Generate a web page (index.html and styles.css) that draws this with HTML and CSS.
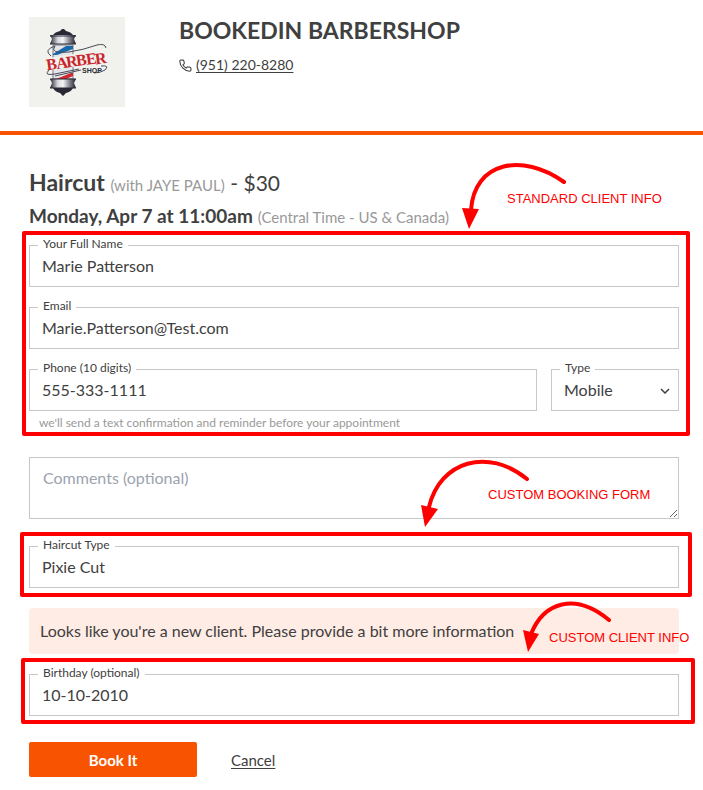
FILE: index.html
```
<!DOCTYPE html>
<html lang="en">
<head>
    <meta charset="UTF-8">
    <meta name="viewport" content="width=device-width, initial-scale=1.0">
    <title>Bookedin Barbershop</title>
    <link rel="stylesheet" href="styles.css">
</head>
<body>
    <header class="shop-header">
        <svg class="logo" viewBox="0 0 96 90" role="img" aria-label="Barber Shop logo">
            <defs>
                <linearGradient id="chrome">
                    <stop offset="0" stop-color="#25252f"/>
                    <stop offset=".3" stop-color="#d8d8de"/>
                    <stop offset=".5" stop-color="#f4f4f6"/>
                    <stop offset=".75" stop-color="#85858f"/>
                    <stop offset="1" stop-color="#20202b"/>
                </linearGradient>
            </defs>
            <rect width="96" height="90" fill="#f1f1ed"/>
            <!-- pole -->
            <path d="M24 28h20v34H24z" fill="#e4e6e9" stroke="#777783"/>
            <path d="M24 37l13-8h7v3L28 38h-4z" fill="#1769aa"/>
            <path d="M27 62l15-6h2v3l-7 3z" fill="#cf2930"/>
            <path d="M24 18q2-3 7-4l2-2h2l2 2q5 1 7 4z" fill="#292936"/>
            <path d="M21 18h26l-2 4 2 5H21l2-5z" fill="url(#chrome)"/>
            <path d="M21 19h26M21 27h26" stroke="#292936"/>
            <path d="M21 62h26l-2 4 2 5H21l2-5z" fill="url(#chrome)"/>
            <path d="M21 62h26M21 71h26" stroke="#292936"/>
            <path d="M24 71h20q-2 4-7 5l-3 3-3-3q-5-1-7-5z" fill="#292936"/>
            <!-- ribbon -->
            <path d="M20 41l56-9v12l-56 10z" fill="#f1f1ed"/>
            <path d="M22 39q-8-6 4-10-6 8 14 6 14-2 28-7 8-2 9 3" fill="none" stroke="#4b4b58"/>
            <path d="M20 53q-6 6 6 4l24-5M26 59l26-6m20-4q9-1 4 4-5 3-11 3" fill="none" stroke="#4b4b58"/>
            <g class="logo-word" transform="rotate(-8 20 53)">
                <text x="18" y="53">B</text>
                <text x="28" y="53">A</text>
                <text x="38" y="53">R</text>
                <text x="48" y="53">B</text>
                <text x="58" y="53">E</text>
                <text x="67" y="54">R</text>
            </g>
            <text class="logo-shop" x="53" y="56">SHOP</text>
        </svg>
        <div class="shop-info">
            <h1>BOOKEDIN BARBERSHOP</h1>
            <p class="phone">
                <svg class="phone-icon" viewBox="0 0 24 24" aria-hidden="true">
                    <path d="M22 17v3.500a2 2 0 0 1-2.200 2A19 19 0 0 1 1.500 4.200 2 2 0 0 1 3.500 2H7a2 2 0 0 1 2 1.700l.8 3.600a2 2 0 0 1-.6 1.900l-1.800 1.800a16 16 0 0 0 5.800 5.700l1.700-1.700a2 2 0 0 1 1.900-.5l3.500.8A2 2 0 0 1 22 17z"/>
                </svg>
                <a href="tel:9512208280">(951) 220-8280</a>
            </p>
        </div>
    </header>

    <main>
        <h2 class="service">Haircut <small>(with JAYE PAUL)</small> <span>- $30</span></h2>
        <p class="time"><strong>Monday, Apr 7 at 11:00am</strong> <small>(Central Time - US &amp; Canada)</small></p>

        <form>
            <section class="group client-group">
                <div class="field">
                    <label for="fullName">Your Full Name</label>
                    <input type="text" id="fullName" value="Marie Patterson">
                </div>
                <div class="field">
                    <label for="email">Email</label>
                    <input type="email" id="email" value="Marie.Patterson@Test.com">
                </div>
                <div class="phone-row">
                    <div class="field">
                        <label for="phone">Phone (10 digits)</label>
                        <input type="tel" id="phone" value="555-333-1111">
                    </div>
                    <div class="field type-field">
                        <label for="phoneType">Type</label>
                        <select id="phoneType">
                            <option>Mobile</option>
                            <option>Home</option>
                            <option>Work</option>
                        </select>
                        <svg class="chevron" viewBox="0 0 10 6" aria-hidden="true"><path d="M1 1l4 4 4-4"/></svg>
                    </div>
                </div>
                <p class="hint">we'll send a text confirmation and reminder before your appointment</p>
                <div class="callout callout-standard">
                    <svg viewBox="0 0 110 70" aria-hidden="true">
                        <path class="curve" d="M104 22C62-8 14 2 11 50"/>
                        <path class="head" d="M2 48l17 1-10 20z"/>
                    </svg>
                    <span>STANDARD CLIENT INFO</span>
                </div>
            </section>

            <textarea class="comments" placeholder="Comments (optional)" aria-label="Comments (optional)"></textarea>

            <section class="group booking-group">
                <div class="field">
                    <label for="haircutType">Haircut Type</label>
                    <input type="text" id="haircutType" value="Pixie Cut">
                </div>
                <div class="callout callout-booking">
                    <svg viewBox="0 0 110 70" aria-hidden="true">
                        <path class="curve" d="M107 21C68-11 20 3 9 49"/>
                        <path class="head" d="M1 47l17 4-13 18z"/>
                    </svg>
                    <span>CUSTOM BOOKING FORM</span>
                </div>
            </section>

            <p class="notice">Looks like you're a new client. Please provide a bit more information</p>

            <section class="group extra-group">
                <div class="field">
                    <label for="birthday">Birthday (optional)</label>
                    <input type="text" id="birthday" value="10-10-2010">
                </div>
                <div class="callout callout-client">
                    <svg viewBox="0 0 110 70" aria-hidden="true">
                        <path class="curve" d="M87 20C53-8 22 2 9 34"/>
                        <path class="head" d="M1 30l16 4-11 18z"/>
                    </svg>
                    <span>CUSTOM CLIENT INFO</span>
                </div>
            </section>

            <div class="actions">
                <button type="submit">Book It</button>
                <a href="#">Cancel</a>
            </div>
        </form>
    </main>
</body>
</html>
```
FILE: styles.css
```
* {
    margin: 0;
    padding: 0;
    box-sizing: border-box;
}

body {
    font-family: Lato, sans-serif;
    font-size: 16px;
    line-height: 20px;
    color: #404040;
    background-color: white;
}

.shop-header {
    display: flex;
    gap: 54px;
    padding: 17px 24px 24px 29px;
    border-bottom: 4px solid #f75300;
}

.logo {
    width: 96px;
    height: 90px;
    flex-shrink: 0;
}

.logo-word {
    font-family: "Liberation Serif", serif;
    font-size: 16px;
    font-weight: bold;
    fill: #c9252c;
}

.logo-shop {
    font: bold 7px "Liberation Sans", sans-serif;
    fill: #292936;
}

h1 {
    font-size: 23px;
    line-height: 26px;
    font-weight: 700;
}

.phone {
    display: flex;
    align-items: center;
    gap: 4px;
    margin-top: 12px;
    font-size: 14px;
}

.phone-icon {
    width: 13px;
    height: 13px;
    fill: none;
    stroke: #404040;
    stroke-width: 2;
}

a {
    color: #404040;
    text-underline-offset: 2px;
}

main {
    padding: 33px 24px 12px 29px;
}

.service {
    font-size: 23px;
    line-height: 28px;
    font-weight: 700;
}

.service span {
    font-size: 21px;
    font-weight: 400;
}

small {
    font-size: 15px;
    font-weight: 400;
    color: #999;
}

.time {
    margin-top: 3px;
    font-size: 19px;
    line-height: 28px;
}

form {
    padding-top: 14px;
}

/* red frame round each group */
.group {
    position: relative;
}

.group::before {
    content: "";
    position: absolute;
    border: 4px solid #f00;
    border-radius: 2px;
    pointer-events: none;
}

.client-group::before {
    inset: -14px -11px -5px -7px;
}

.booking-group::before {
    inset: -14px -13px -9px -9px;
}

.extra-group::before {
    inset: -16px -16px -8px -8px;
}

.field {
    position: relative;
    margin-bottom: 20px;
}

.field label {
    position: absolute;
    top: -9px;
    left: 9px;
    padding: 0 5px;
    font-size: 12px;
    line-height: 16px;
    background-color: white;
}

input, select, textarea {
    display: block;
    width: 100%;
    height: 42px;
    padding: 0 12px 2px;
    border: 1px solid #c8c8c8;
    border-radius: 0;
    font: inherit;
    color: #404040;
    background-color: white;
}

select {
    appearance: none;
    padding-bottom: 0;
}

.phone-row {
    display: flex;
    gap: 14px;
}

.phone-row .field {
    flex: 1;
    margin-bottom: 0;
}

.phone-row .type-field {
    flex: 0 0 128px;
}

.chevron {
    position: absolute;
    right: 9px;
    top: 19px;
    width: 10px;
    height: 6px;
    fill: none;
    stroke: #404040;
    stroke-width: 1.5;
    pointer-events: none;
}

.hint {
    padding: 4px 10px 0;
    font-size: 12px;
    line-height: 16px;
    color: #999;
}

.comments {
    height: 62px;
    margin: 26px 0 27px;
    padding: 10px 13px;
    resize: vertical;
}

.comments::placeholder {
    color: #9ca3af;
}

.notice {
    padding: 13px 11px;
    margin-bottom: 20px;
    border-radius: 4px;
    background-color: #ffece4;
}

.callout {
    position: absolute;
    z-index: 1;
    font-family: "Liberation Sans", sans-serif;
    font-size: 13px;
    line-height: 16px;
    color: #f00;
    white-space: nowrap;
    pointer-events: none;
}

.callout svg {
    display: block;
    width: 110px;
    height: 70px;
}

.callout span {
    position: absolute;
}

.curve {
    fill: none;
    stroke: #f00;
    stroke-width: 4;
    stroke-linecap: round;
}

.head {
    fill: #f00;
}

.callout-standard {
    top: -85px;
    right: 109px;
}

.callout-standard span {
    top: 31px;
    left: 47px;
}

.callout-booking {
    top: -88px;
    right: 149px;
}

.callout-booking span {
    top: 29px;
    left: 68px;
}

.callout-client {
    top: -74px;
    right: 47px;
}

.callout-client span {
    top: 30px;
    left: 27px;
}

.actions {
    display: flex;
    align-items: center;
    gap: 34px;
    padding-top: 6px;
    font-size: 15px;
}

button {
    width: 168px;
    height: 35px;
    border: none;
    border-radius: 2px;
    font: inherit;
    font-weight: 700;
    color: white;
    background-color: #f75300;
    cursor: pointer;
}
```
